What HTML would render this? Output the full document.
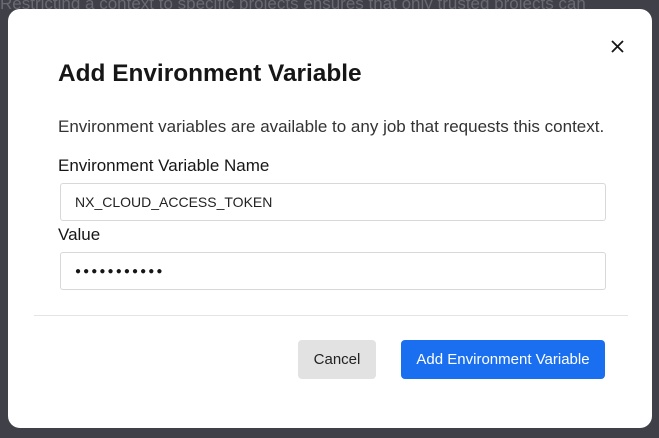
<html><head><style>
body{margin:0;width:659px;height:438px;background:#3f4048;font-family:"Liberation Sans",sans-serif;position:relative;overflow:hidden}
.bg{position:absolute;color:#6a6b72;font-size:16px;white-space:nowrap}
.m{position:absolute;left:8px;top:9px;width:644px;height:419px;background:#fff;border-radius:12px}
.a{position:absolute;white-space:nowrap;color:#161616}
.in{position:absolute;left:52px;height:38px;border:1px solid #d8d8d8;border-radius:3px;box-sizing:border-box;width:546px}
</style></head><body>
<div class="bg" style="left:0;top:-6px;font-size:17px">Restricting a context to specific projects ensures that only trusted projects can</div>
<div class="m">
<svg style="position:absolute;left:603px;top:31px" width="13" height="13" viewBox="0 0 13 13"><path d="M1 1L12 12M12 1L1 12" stroke="#161616" stroke-width="1.8"/></svg>
<div class="a" style="left:50px;top:51px;font-size:24.4px;font-weight:bold">Add Environment Variable</div>
<div class="a" style="left:50px;top:108px;font-size:17px;color:#333">Environment variables are available to any job that requests this context.</div>
<div class="a" style="left:50px;top:147px;font-size:17px">Environment Variable Name</div>
<div class="in" style="top:174px"></div>
<div class="a" style="left:67px;top:185px;font-size:14px;color:#222">NX_CLOUD_ACCESS_TOKEN</div>
<div class="a" style="left:50px;top:216px;font-size:17px">Value</div>
<div class="in" style="top:243px"></div>
<div class="a" style="left:67px;top:257px;font-size:10px;letter-spacing:2.1px">●●●●●●●●●●●</div>
<div style="position:absolute;left:26px;top:306px;width:594px;height:1px;background:#e4e4e4"></div>
<div style="position:absolute;left:290px;top:331px;width:78px;height:39px;background:#e2e2e2;border-radius:4px;font-size:15px;color:#222;text-align:center;line-height:39px">Cancel</div>
<div style="position:absolute;left:393px;top:331px;width:204px;height:39px;background:#1a6ff0;border-radius:4px;font-size:15px;color:#fff;text-align:center;line-height:39px">Add Environment Variable</div>
</div>
</body></html>
